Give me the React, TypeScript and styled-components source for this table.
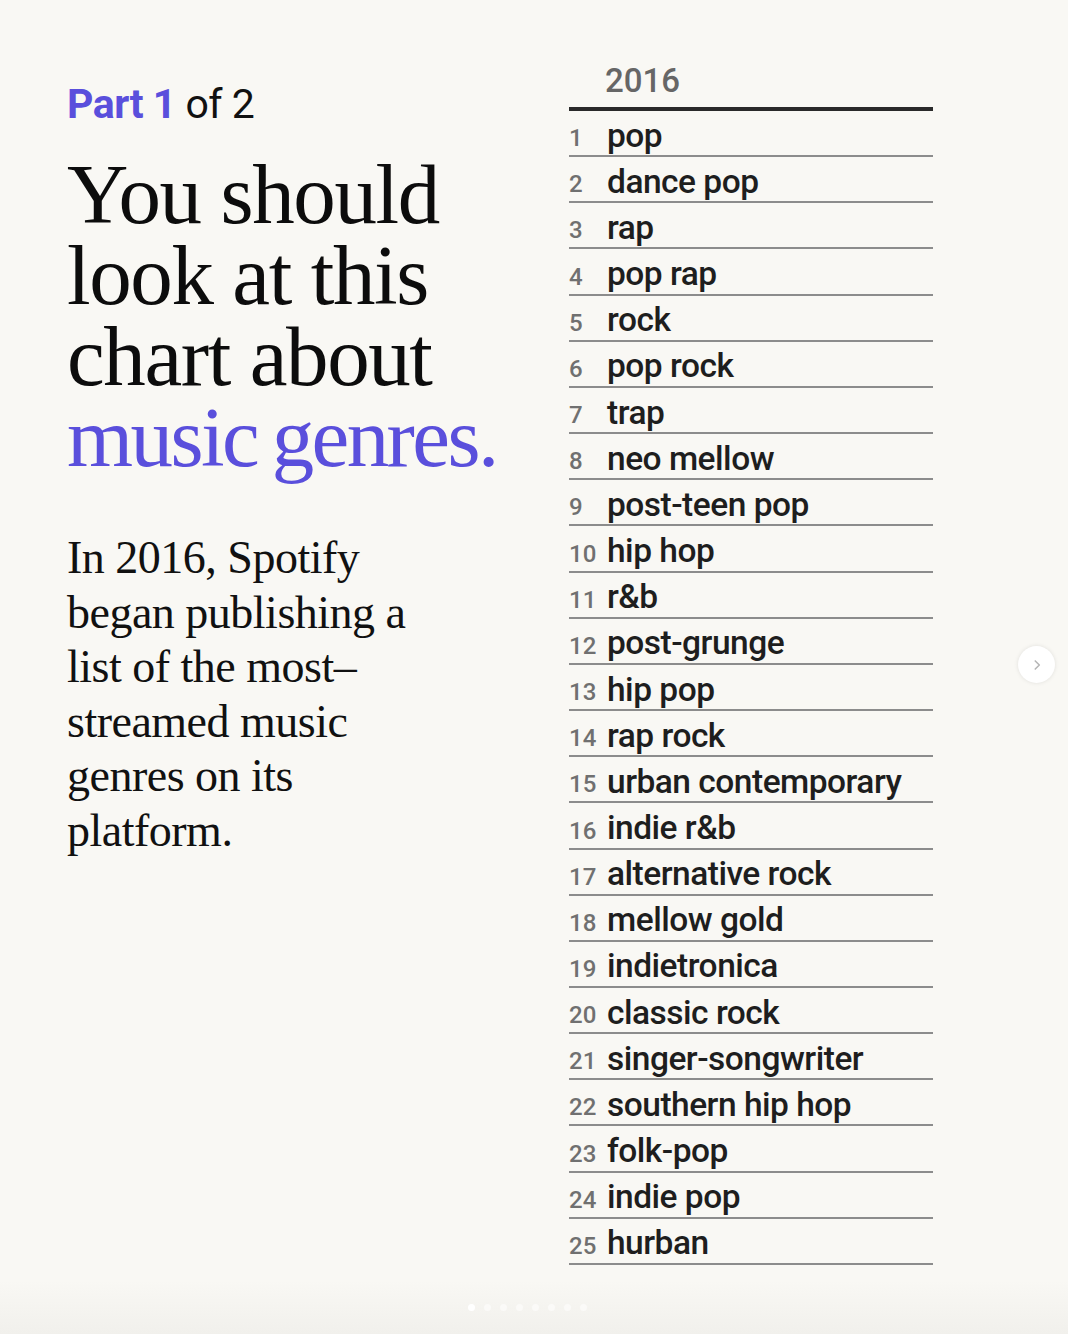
import React from "react";
import styled, { createGlobalStyle } from "styled-components";

const GlobalStyle = createGlobalStyle`
  html, body {
    margin: 0;
    padding: 0;
    background: #f9f8f4;
  }
  * {
    box-sizing: border-box;
  }
`;

const genres = [
  "pop",
  "dance pop",
  "rap",
  "pop rap",
  "rock",
  "pop rock",
  "trap",
  "neo mellow",
  "post-teen pop",
  "hip hop",
  "r&b",
  "post-grunge",
  "hip pop",
  "rap rock",
  "urban contemporary",
  "indie r&b",
  "alternative rock",
  "mellow gold",
  "indietronica",
  "classic rock",
  "singer-songwriter",
  "southern hip hop",
  "folk-pop",
  "indie pop",
  "hurban",
];

const Page = styled.main`
  position: relative;
  width: 1068px;
  height: 1334px;
  overflow: hidden;
  padding: 62px 0 0 67px;
  display: grid;
  grid-template-columns: 502px 364px;
  align-items: start;
  background: linear-gradient(to bottom, #f9f8f4 0%, #f9f8f4 96%, #f1f0ec 100%);
`;

const Intro = styled.section`
  display: flex;
  flex-direction: column;
`;

const Kicker = styled.div`
  font-family: Roboto, "Liberation Sans", sans-serif;
  font-size: 41px;
  line-height: 1;
  color: #111;
  margin-top: 22px;
  letter-spacing: -0.5px;

  strong {
    color: #5a4fdc;
    font-weight: 700;
  }
`;

const Headline = styled.h1`
  margin: 29px 0 0;
  font-family: "Liberation Serif", "Times New Roman", serif;
  font-weight: 400;
  font-size: 85px;
  line-height: 81px;
  letter-spacing: -1.4px;
  color: #0c0c0c;

  em {
    font-style: normal;
    color: #5a4fdc;
    letter-spacing: -2.6px;
    word-spacing: -4px;
  }
`;

const Body = styled.p`
  margin: 53px 0 0;
  font-family: "Liberation Serif", "Times New Roman", serif;
  font-size: 46px;
  line-height: 54.6px;
  letter-spacing: -0.5px;
  color: #111;
`;

const Chart = styled.section`
  display: flex;
  flex-direction: column;
`;

const Year = styled.div`
  font-family: Roboto, "Liberation Sans", sans-serif;
  font-weight: 500;
  font-size: 33px;
  line-height: 1;
  color: #666;
  padding: 2px 0 12px 36px;
  border-bottom: 4px solid #2a2a2a;
  height: 49px;
`;

const Row = styled.div`
  height: 46.16px;
  display: flex;
  align-items: flex-end;
  padding-bottom: 3px;
  border-bottom: 2px solid #8c8c8c;
`;

const Rank = styled.span`
  width: 38px;
  flex: none;
  font-family: Roboto, "Liberation Sans", sans-serif;
  font-weight: 500;
  font-size: 24px;
  line-height: 1;
  color: #707070;
  padding-bottom: 2px;
`;

const Genre = styled.span`
  font-family: Roboto, "Liberation Sans", sans-serif;
  font-weight: 500;
  font-size: 33.5px;
  line-height: 1;
  letter-spacing: -0.5px;
  color: #1e1e1e;
  white-space: nowrap;
`;

const NextButton = styled.button`
  position: absolute;
  left: 1018px;
  top: 646px;
  width: 37px;
  height: 37px;
  border-radius: 50%;
  border: none;
  background: #fff;
  box-shadow: 0 0 4px rgba(0, 0, 0, 0.1);
  display: flex;
  align-items: center;
  justify-content: center;
  padding: 0;
`;

const Dots = styled.div`
  position: absolute;
  left: 468px;
  top: 1304px;
  display: flex;
  gap: 9px;
`;

const Dot = styled.span<{ $active?: boolean }>`
  width: 7px;
  height: 7px;
  border-radius: 50%;
  background: ${({ $active }) => ($active ? "#ffffff" : "rgba(255,255,255,0.55)")};
`;

export default function App() {
  return (
    <>
      <GlobalStyle />
      <Page>
        <Intro>
          <Kicker>
            <strong>Part 1</strong> of 2
          </Kicker>
          <Headline>
            You should
            <br />
            look at this
            <br />
            chart about
            <br />
            <em>music genres.</em>
          </Headline>
          <Body>
            In 2016, Spotify
            <br />
            began publishing a
            <br />
            list of the most–
            <br />
            streamed music
            <br />
            genres on its
            <br />
            platform.
          </Body>
        </Intro>
        <Chart>
          <Year>2016</Year>
          {genres.map((g, i) => (
            <Row key={g}>
              <Rank>{i + 1}</Rank>
              <Genre>{g}</Genre>
            </Row>
          ))}
        </Chart>
        <NextButton aria-label="Next">
          <svg width="14" height="14" viewBox="0 0 24 24" fill="none" stroke="#b5b5b5" strokeWidth="2.6" strokeLinecap="round" strokeLinejoin="round">
            <path d="M9 5l7 7-7 7" />
          </svg>
        </NextButton>
        <Dots>
          {Array.from({ length: 8 }).map((_, i) => (
            <Dot key={i} $active={i === 0} />
          ))}
        </Dots>
      </Page>
    </>
  );
}
